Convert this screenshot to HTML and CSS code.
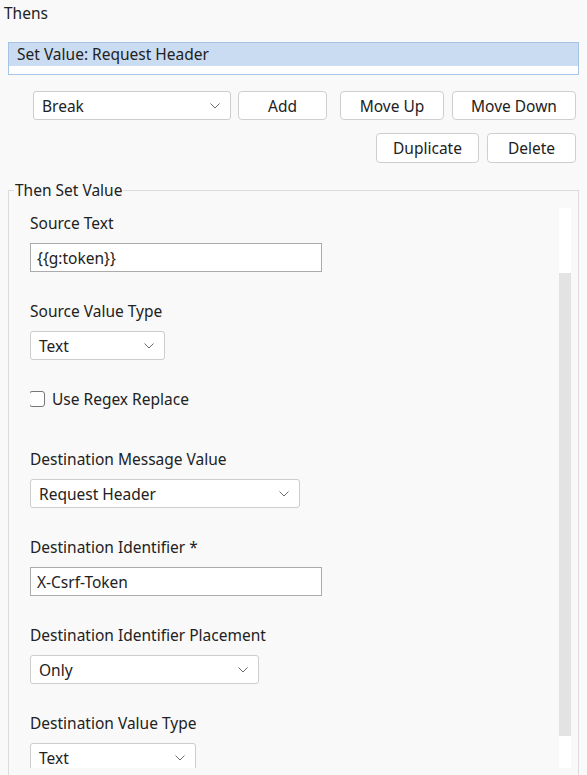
FILE: index.html
```html
<!DOCTYPE html>
<html>
<head>
<meta charset="utf-8">
<link rel="stylesheet" href="styles.css">
</head>
<body>
<div class="title">Thens</div>
<div class="listbox">
  <div class="item">Set Value: Request Header</div>
</div>
<div class="row row1">
  <div class="select w-break"><span>Break</span><svg class="chev" width="10" height="6" viewBox="0 0 10 6"><path d="M0.5 0.5 L5 5 L9.5 0.5" fill="none" stroke="#6b6b6b" stroke-width="1"/></svg></div>
  <div class="btn w-add">Add</div>
  <div class="btn w-up">Move Up</div>
  <div class="btn w-down">Move Down</div>
</div>
<div class="row row2">
  <div class="btn w-dup">Duplicate</div>
  <div class="btn w-del">Delete</div>
</div>
<fieldset class="group">
  <legend>Then Set Value</legend>
  <div class="scroller">
    <div class="content">
      <div class="field first">
        <div class="label">Source Text</div>
        <div class="input w-292">{{g:token}}</div>
      </div>
      <div class="field">
        <div class="label">Source Value Type</div>
        <div class="select w-135"><span>Text</span><svg class="chev" width="10" height="6" viewBox="0 0 10 6"><path d="M0.5 0.5 L5 5 L9.5 0.5" fill="none" stroke="#6b6b6b" stroke-width="1"/></svg></div>
      </div>
      <div class="check-row">
        <span class="checkbox"></span><span>Use Regex Replace</span>
      </div>
      <div class="field">
        <div class="label">Destination Message Value</div>
        <div class="select w-270"><span>Request Header</span><svg class="chev" width="10" height="6" viewBox="0 0 10 6"><path d="M0.5 0.5 L5 5 L9.5 0.5" fill="none" stroke="#6b6b6b" stroke-width="1"/></svg></div>
      </div>
      <div class="field">
        <div class="label">Destination Identifier *</div>
        <div class="input w-292">X-Csrf-Token</div>
      </div>
      <div class="field">
        <div class="label">Destination Identifier Placement</div>
        <div class="select w-229"><span>Only</span><svg class="chev" width="10" height="6" viewBox="0 0 10 6"><path d="M0.5 0.5 L5 5 L9.5 0.5" fill="none" stroke="#6b6b6b" stroke-width="1"/></svg></div>
      </div>
      <div class="field">
        <div class="label">Destination Value Type</div>
        <div class="select w-166"><span>Text</span><svg class="chev" width="10" height="6" viewBox="0 0 10 6"><path d="M0.5 0.5 L5 5 L9.5 0.5" fill="none" stroke="#6b6b6b" stroke-width="1"/></svg></div>
      </div>
    </div>
    <div class="scrollbar"><div class="thumb"></div></div>
  </div>
</fieldset>
</body>
</html>
```
FILE: styles.css
```css
html, body {
  margin: 0;
  padding: 0;
  background: #f9f9f9;
}
body {
  font-family: "Noto Sans", "Open Sans", sans-serif;
  font-size: 15.5px;
  color: #222;
  overflow: hidden;
  height: 775px;
}
.title {
  padding: 3px 0 0 4px;
  line-height: 20px;
  height: 21px;
}
.listbox {
  margin: 18px 8px 0 8px;
  height: 33px;
  box-sizing: border-box;
  border: 1px solid #a6c4e6;
  background: #fff;
}
.item {
  background: #cadcf1;
  height: 23px;
  line-height: 23px;
  padding-left: 8px;
}
.row {
  display: flex;
  justify-content: flex-end;
  padding-right: 11px;
}
.row1 {
  margin-top: 16px;
  height: 29px;
}
.row2 {
  margin-top: 13px;
  height: 30px;
}
.btn {
  box-sizing: border-box;
  height: 100%;
  border: 1px solid #cfcfcf;
  border-radius: 4px;
  background: #fff;
  display: flex;
  align-items: center;
  justify-content: center;
}
.select {
  box-sizing: border-box;
  height: 29px;
  border: 1px solid #cdcdcd;
  border-radius: 3px;
  background: #fff;
  display: flex;
  align-items: center;
  padding: 0 10px 0 8px;
}
.select .chev {
  margin-left: auto;
}
.input {
  box-sizing: border-box;
  height: 29px;
  border: 1px solid #ababab;
  background: #fff;
  display: flex;
  align-items: center;
  padding-left: 6px;
}
.w-break { width: 198px; margin-right: 7px; }
.w-add { width: 89px; margin-right: 13px; }
.w-up { width: 104px; margin-right: 8px; }
.w-down { width: 124px; }
.w-dup { width: 103px; margin-right: 8px; }
.w-del { width: 89px; }
.w-292 { width: 292px; }
.w-135 { width: 135px; }
.w-270 { width: 270px; }
.w-229 { width: 229px; }
.w-166 { width: 166px; }

.group {
  margin: 17px 8px 0 8px;
  border: 1px solid #dcdcdc;
  padding: 8px 7px 20px 21px;
  min-width: 0;
}
.group legend {
  margin-left: -16px;
  padding: 0 1px;
  line-height: 20px;
}
.scroller {
  display: flex;
  height: 560px;
  overflow: hidden;
}
.content {
  flex: 1;
  padding-top: 5px;
}
.field {
  margin-bottom: 29px;
}
.label {
  line-height: 20px;
  margin-bottom: 10px;
}
.check-row {
  display: flex;
  align-items: center;
  height: 20px;
  margin-top: 31px;
  margin-bottom: 40px;
  margin-left: -1px;
}
.field + .check-row { margin-top: 2px; }
.checkbox {
  box-sizing: border-box;
  width: 16px;
  height: 16px;
  border: 1px solid #777;
  border-radius: 3px;
  background: #fff;
  margin-right: 7px;
}
.scrollbar {
  width: 12px;
  background: #fff;
  flex-shrink: 0;
}
.thumb {
  margin-top: 65px;
  height: 463px;
  background: #e3e3e3;
}
```
